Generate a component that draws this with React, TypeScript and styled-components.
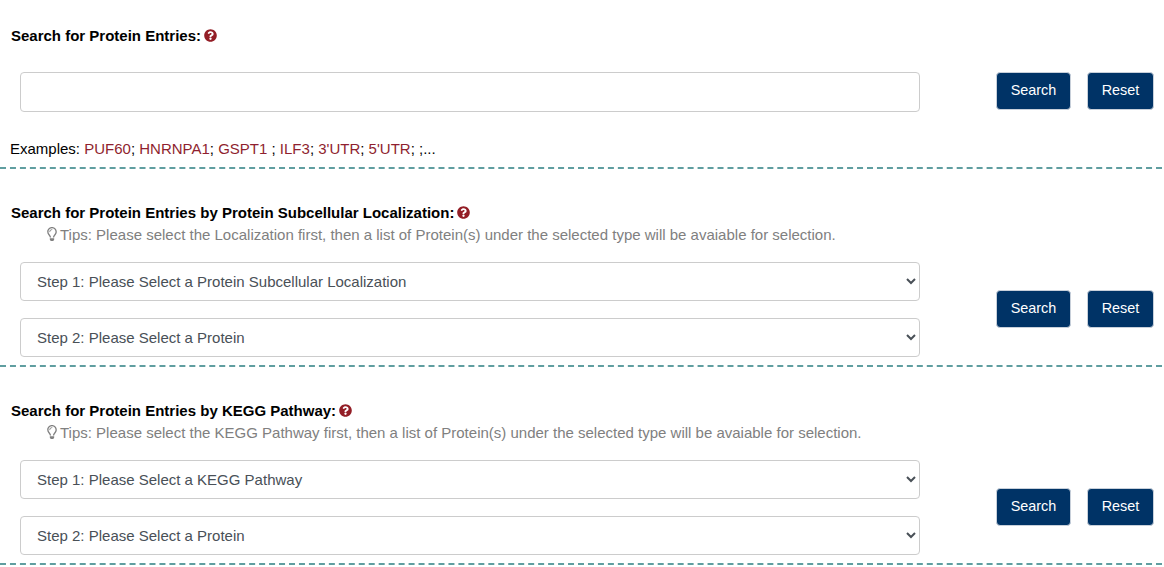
import React from "react";
import styled, { createGlobalStyle } from "styled-components";
import { FaQuestionCircle, FaRegLightbulb } from "react-icons/fa";

const GlobalStyle = createGlobalStyle`
  html, body {
    margin: 0;
    padding: 0;
    background: #fff;
  }
  body {
    font-family: "Liberation Sans", Arial, sans-serif;
    font-size: 15px;
    color: #212529;
  }
`;

interface SelectSectionProps {
  title: string;
  tip: string;
  stepOne: string;
}

const SelectSection: React.FC<SelectSectionProps> = ({ title, tip, stepOne }) => (
  <Section $top={35} $bottom={8}>
    <Heading>
      {title} <HelpIcon />
    </Heading>
    <Tips>
      <FaRegLightbulb />
      {tip}
    </Tips>
    <Row>
      <Fields>
        <Select defaultValue="">
          <option value="">{stepOne}</option>
        </Select>
        <Select defaultValue="">
          <option value="">Step 2: Please Select a Protein</option>
        </Select>
      </Fields>
      <Actions>
        <Button $width={75}>Search</Button>
        <Button $width={67}>Reset</Button>
      </Actions>
    </Row>
  </Section>
);

const App: React.FC = () => {
  return (
    <Page>
      <GlobalStyle />
      <Section $top={27} $bottom={10}>
        <Heading>
          Search for Protein Entries: <HelpIcon />
        </Heading>
        <SearchRow>
          <Fields>
            <Input type="text" />
          </Fields>
          <Actions>
            <Button $width={75}>Search</Button>
            <Button $width={67}>Reset</Button>
          </Actions>
        </SearchRow>
        <Examples>
          Examples: <Term>PUF60</Term>; <Term>HNRNPA1</Term>; <Term>GSPT1</Term> ; <Term>ILF3</Term>;{" "}
          <Term>3'UTR</Term>; <Term>5'UTR</Term>; ;...
        </Examples>
      </Section>
      <SelectSection
        title="Search for Protein Entries by Protein Subcellular Localization:"
        tip="Tips: Please select the Localization first, then a list of Protein(s) under the selected type will be avaiable for selection."
        stepOne="Step 1: Please Select a Protein Subcellular Localization"
      />
      <SelectSection
        title="Search for Protein Entries by KEGG Pathway:"
        tip="Tips: Please select the KEGG Pathway first, then a list of Protein(s) under the selected type will be avaiable for selection."
        stepOne="Step 1: Please Select a KEGG Pathway"
      />
    </Page>
  );
};

const Page = styled.div`
  width: 1162px;
`;

const Section = styled.section<{ $top: number; $bottom: number }>`
  padding-top: ${(p) => p.$top}px;
  padding-bottom: ${(p) => p.$bottom}px;
  border-bottom: 2px dashed #5f9ea0;
`;

const Heading = styled.div`
  display: flex;
  align-items: center;
  gap: 3px;
  height: 16px;
  margin-left: 11px;
  font-size: 15px;
  font-weight: bold;
  color: #000;
`;

const HelpIcon = styled(FaQuestionCircle)`
  width: 13px;
  height: 13px;
  color: #931e26;
`;

const Tips = styled.div`
  display: flex;
  align-items: center;
  height: 16px;
  margin-top: 6px;
  margin-left: 47px;
  font-size: 15px;
  color: #808080;

  svg {
    width: 10px;
    height: 14px;
    margin-right: 3px;
  }
`;

const Row = styled.div`
  display: flex;
  align-items: center;
  margin-top: 20px;
  padding-left: 20px;
`;

const SearchRow = styled(Row)`
  align-items: flex-start;
  margin-top: 29px;
`;

const Fields = styled.div`
  display: flex;
  flex-direction: column;
  gap: 17px;
  width: 900px;
`;

const Input = styled.input`
  box-sizing: border-box;
  width: 100%;
  height: 40px;
  padding: 6px 12px;
  border: 1px solid #ccc;
  border-radius: 4px;
  background: #fff;
  font-family: inherit;
  font-size: 15px;
  color: #495057;
`;

const Select = styled.select`
  box-sizing: border-box;
  width: 100%;
  height: 39px;
  padding: 6px 12px;
  border: 1px solid #ccc;
  border-radius: 4px;
  background: #fff;
  font-family: inherit;
  font-size: 15px;
  color: #495057;
`;

const Actions = styled.div`
  display: flex;
  gap: 16px;
  margin-left: 76px;
  padding-bottom: 1px;
`;

const Button = styled.button<{ $width: number }>`
  box-sizing: border-box;
  width: ${(p) => p.$width}px;
  height: 38px;
  padding: 0 0 2px;
  border: 1px solid #c8d0da;
  border-radius: 4px;
  background: #003366;
  font-family: inherit;
  font-size: 14.4px;
  color: #fff;
  cursor: pointer;
`;

const Examples = styled.div`
  margin-top: 29px;
  margin-left: 10px;
  height: 16px;
  line-height: 16px;
  font-size: 15px;
  color: #000;
`;

const Term = styled.span`
  color: #8f1f2f;
`;

export default App;
